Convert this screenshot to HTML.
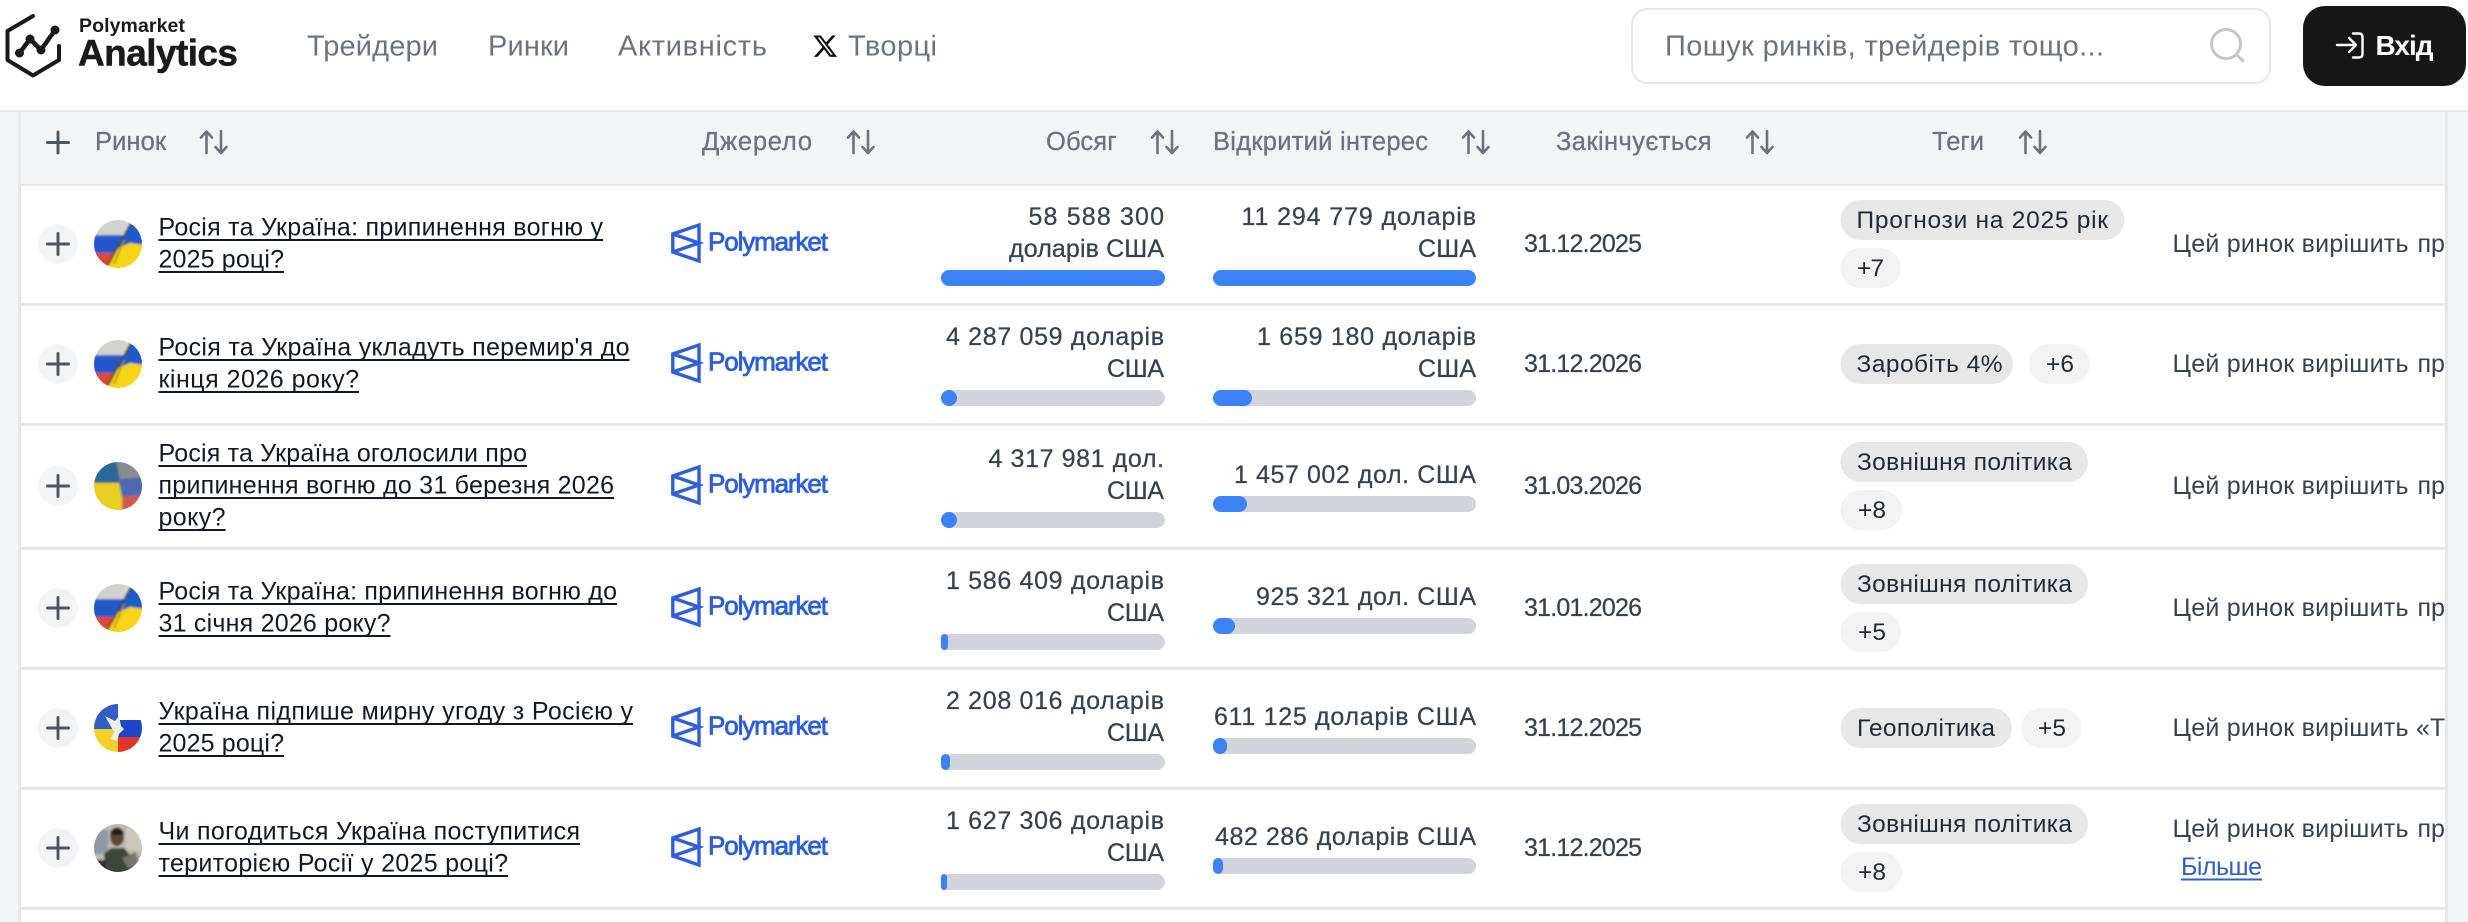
<!DOCTYPE html>
<html lang="uk"><head><meta charset="utf-8"><title>Polymarket Analytics</title>
<style>
html,body{margin:0;padding:0;background:#fff;width:2468px;height:922px;overflow:hidden}
svg{display:block}
text{font-family:"Liberation Sans","DejaVu Sans",sans-serif;white-space:pre}
.nav{font-size:29px;fill:#6b7280}
.th{font-size:25.5px;fill:#6b7280;stroke:#6b7280;stroke-width:.3px}
.t{font-size:25px;fill:#111827}
.u{fill:#111827}
.v{font-size:25px;fill:#374151;stroke:#374151;stroke-width:.25px}
.d{font-size:25px;fill:#374151}
.g{font-size:24.5px;fill:#1f2937}
.pm{font-size:26px;fill:#2d5fdc;stroke:#2d5fdc;stroke-width:.8px}
.sort{fill:none;stroke:#6b7280;stroke-width:2.6;stroke-linecap:round;stroke-linejoin:round}
.plus{stroke:#4b5563;stroke-width:2.900;stroke-linecap:round}
.logo{fill:none;stroke:#2d5fdc;stroke-width:3.4;stroke-linejoin:miter}
</style></head><body>
<svg xmlns="http://www.w3.org/2000/svg" width="2468" height="922" viewBox="0 0 2468 922">
<defs>
<clipPath id="cc"><circle cx="24" cy="24" r="24"/></clipPath>
<filter id="bl" x="-5%" y="-5%" width="110%" height="110%"><feGaussianBlur stdDeviation="1"/></filter>
<g id="flagA"><g clip-path="url(#cc)"><g filter="url(#bl)">
<rect x="-3" y="-3" width="54" height="54" fill="#d8d6d2"/><path d="M-3-3H34L24 15H-3z" fill="#d4d2cd"/>
<rect x="-3" y="15" width="54" height="18" fill="#2458cc"/><rect x="-3" y="33" width="54" height="18" fill="#dc4a38"/>
<path d="M37 2 51 8V51H12L22 30z" fill="#f7d415"/>
<path d="M37 2 51 8V25L36 23 22 29z" fill="#1f5cc8"/>
<path d="M37 3 14 45" stroke="#3f3e2c" stroke-width="1.800" fill="none"/>
<path d="M30 20 20 44" stroke="#a88e1c" stroke-width="1.500" fill="none"/>
</g></g></g>
<g id="flagB"><g clip-path="url(#cc)"><g filter="url(#bl)">
<rect x="-3" y="-3" width="54" height="54" fill="#e9cf22"/><rect x="-3" y="-3" width="29" height="24" fill="#2a6797"/>
<path d="M22-3H51V51H28L28 28z" fill="#8a8b92"/><path d="M24 17 51 15V33L28 35z" fill="#5069ae"/><path d="M28 35 51 33V51H28z" fill="#cf5a4c"/>
</g></g></g>
<g id="flagC"><g clip-path="url(#cc)">
<rect width="24" height="25" fill="#2f5fc4"/><rect y="25" width="24" height="23" fill="#f3cf2b"/>
<rect x="24" y="16" width="24" height="17" fill="#1d45c8"/><rect x="24" y="33" width="24" height="15" fill="#e0352b"/>
<rect x="24" width="24" height="16" fill="#fff"/>
<path d="M11 12 21 17 25 12 27 22 30 25 25 30 23 37 17 35 20 28z" fill="#eeeee6"/>
</g></g>
<g id="photo"><g clip-path="url(#cc)"><g filter="url(#bl)">
<rect x="-3" y="-3" width="54" height="54" fill="#bcb9b0"/><rect x="-3" y="6" width="17" height="24" fill="#8e99a8"/><rect x="32" y="4" width="19" height="22" fill="#cfc8ba"/>
<path d="M12 51 10 30 17 24H30L37 32 41 51z" fill="#3e453d"/>
<ellipse cx="23" cy="13" rx="7" ry="9" fill="#5e4536"/><path d="M16 8Q23-1 30 8L29 11H17z" fill="#221c17"/>
<path d="M28 34 42 28 46 42 34 44z" fill="#77746c"/><path d="M-3 36H12V51H-3z" fill="#332e2a"/>
</g></g></g>
<g id="pmlogo"><path class="logo" d="M28 1.500 1.800 10.500V28.500L28 37.500ZM1.800 10.500 28 19.500 1.800 28.500"/></g>
<g id="sort"><path class="sort" d="M6.500 23V1.500M1 7.500 6.500 1.500 12 7.500M21 1V23M15.500 17 21 23 26.500 17"/></g>
<g id="add"><circle cx="20" cy="20" r="20" fill="#f3f4f6"/><path class="plus" d="M9.500 20H30.500M20 9.500V30.500"/></g>
</defs>

<!-- page background -->
<rect x="0" y="110" width="2468" height="812" fill="#f3f4f6"/>
<rect x="18" y="112" width="2430" height="810" fill="#e5e7eb"/>
<rect x="0" y="110" width="2468" height="2" fill="#e5e7eb"/>
<rect x="21" y="112" width="2424" height="72" fill="#f3f4f6"/>
<rect x="21" y="186" width="2424" height="117" fill="#fff"/>
<rect x="21" y="306" width="2424" height="117" fill="#fff"/>
<rect x="21" y="426" width="2424" height="121" fill="#fff"/>
<rect x="21" y="550" width="2424" height="117" fill="#fff"/>
<rect x="21" y="670" width="2424" height="117" fill="#fff"/>
<rect x="21" y="790" width="2424" height="117" fill="#fff"/>
<rect x="21" y="910" width="2424" height="12" fill="#fff"/>

<!-- header -->
<g fill="none" stroke="#1a1a1a" stroke-width="4" stroke-linecap="round" stroke-linejoin="round">
<path d="M33 16 7.500 31V60L33 75.500 59 60V46"/>
<path d="M19.500 53 30 39 41 50 55 30" stroke-width="4.500"/></g>
<g fill="#1a1a1a"><circle cx="19.500" cy="53" r="4.500"/><circle cx="30" cy="39" r="4.500"/><circle cx="41" cy="50" r="4.500"/><circle cx="55" cy="30" r="4.500"/></g>
<text x="79" y="32" font-size="19.500" font-weight="700" fill="#1a1a1a" textLength="106">Polymarket</text>
<text x="78" y="65.500" font-size="37" font-weight="700" fill="#1a1a1a" stroke="#1a1a1a" stroke-width=".5" textLength="160">Analytics</text>
<text class="nav" x="307" y="55.500" textLength="131">Трейдери</text>
<text class="nav" x="488" y="55.500" textLength="81">Ринки</text>
<text class="nav" x="618" y="55.500" textLength="149">Активність</text>
<path transform="translate(812 33) scale(1.1)" fill="#111" d="M18.244 2.250h3.308l-7.227 8.260 8.502 11.240H16.170l-5.214-6.817L4.990 21.750H1.680l7.730-8.835L1.254 2.250H8.080l4.713 6.231zm-1.161 17.520h1.833L7.084 4.126H5.117z"/>
<text class="nav" x="848" y="55.500" textLength="89">Творці</text>
<rect x="1632" y="9" width="638" height="74" rx="15" fill="#fff" stroke="#e5e7eb" stroke-width="2"/>
<text class="nav" x="1665" y="55.500" textLength="439">Пошук ринків, трейдерів тощо...</text>
<g fill="none" stroke="#c4c6ca" stroke-width="3" stroke-linecap="round"><circle cx="2226" cy="44" r="14.500"/><path d="M2236.500 54.500 2243 61"/></g>
<rect x="2303" y="6" width="163" height="80" rx="22" fill="#171717"/>
<path d="M2337 45H2356M2349 38l7 7-7 7M2353 33.500h6q3.500 0 3.500 3.500v17q0 3.500-3.500 3.500h-6" fill="none" stroke="#fff" stroke-width="2.400" stroke-linecap="round" stroke-linejoin="round"/>
<text x="2375.500" y="55" font-size="28" font-weight="700" fill="#fff" textLength="58">Вхід</text>

<!-- table head -->
<path class="plus" d="M47.500 142.500H68.500M58 132V153"/>
<text class="th" x="95" y="150" textLength="71">Ринок</text><use href="#sort" x="200" y="130"/>
<text class="th" x="702" y="150" textLength="110">Джерело</text><use href="#sort" x="847" y="130"/>
<text class="th" x="1046" y="150" textLength="70.500">Обсяг</text><use href="#sort" x="1151" y="130"/>
<text class="th" x="1213" y="150" textLength="215">Відкритий інтерес</text><use href="#sort" x="1462" y="130"/>
<text class="th" x="1556" y="150" textLength="155.500">Закінчується</text><use href="#sort" x="1746" y="130"/>
<text class="th" x="1932" y="150" textLength="52">Теги</text><use href="#sort" x="2019" y="130"/>

<!-- row 1 -->
<use href="#add" x="38" y="224"/><use href="#flagA" x="94" y="220"/>
<text class="t" x="158.500" y="235.500" textLength="444.500">Росія та Україна: припинення вогню у</text><rect class="u" x="158.500" y="239" width="444.500" height="2"/>
<text class="t" x="158.500" y="267.500" textLength="125.500">2025 році?</text><rect class="u" x="158.500" y="271" width="125.500" height="2"/>
<use href="#pmlogo" x="671" y="223.500"/><text class="pm" x="708" y="250.500" textLength="120">Polymarket</text>
<text class="v" x="1028.500" y="225" textLength="135.500">58 588 300</text>
<text class="v" x="1009" y="257" textLength="155">доларів США</text>
<rect x="941" y="270" width="224" height="16" rx="8" fill="#3b82f6"/>
<text class="v" x="1241.500" y="225" textLength="234.500">11 294 779 доларів</text>
<text class="v" x="1418" y="257" textLength="58">США</text>
<rect x="1213" y="270" width="263" height="16" rx="8" fill="#3b82f6"/>
<text class="v" x="1524" y="252" textLength="118">31.12.2025</text>
<rect x="1840.500" y="200" width="284" height="40" rx="20" fill="#e7e7e7"/><text class="g" x="1856.500" y="228" textLength="251.500">Прогнози на 2025 рік</text>
<rect x="1840.500" y="248" width="60.500" height="40" rx="20" fill="#f3f3f3"/><text class="g" x="1857" y="276" textLength="27">+7</text>

<!-- row 2 -->
<use href="#add" x="38" y="344"/><use href="#flagA" x="94" y="340"/>
<text class="t" x="158.500" y="355.500" textLength="471">Росія та Україна укладуть перемир'я до</text><rect class="u" x="158.500" y="359" width="471" height="2"/>
<text class="t" x="158.500" y="387.500" textLength="200.500">кінця 2026 року?</text><rect class="u" x="158.500" y="391" width="200.500" height="2"/>
<use href="#pmlogo" x="671" y="343.500"/><text class="pm" x="708" y="370.500" textLength="120">Polymarket</text>
<text class="v" x="946" y="345" textLength="218">4 287 059 доларів</text>
<text class="v" x="1107" y="377" textLength="57">США</text>
<rect x="941" y="390" width="224" height="16" rx="8" fill="#d1d5db"/><rect x="941" y="390" width="16" height="16" rx="8" fill="#3b82f6"/>
<text class="v" x="1257" y="345" textLength="219">1 659 180 доларів</text>
<text class="v" x="1418" y="377" textLength="58">США</text>
<rect x="1213" y="390" width="263" height="16" rx="8" fill="#d1d5db"/><rect x="1213" y="390" width="39" height="16" rx="8" fill="#3b82f6"/>
<text class="v" x="1524" y="372" textLength="118">31.12.2026</text>
<rect x="1840.500" y="344" width="172.500" height="40" rx="20" fill="#e7e7e7"/><text class="g" x="1856.500" y="372" textLength="146">Заробіть 4%</text>
<rect x="2029" y="344" width="61" height="40" rx="20" fill="#f3f3f3"/><text class="g" x="2046" y="372" textLength="28">+6</text>

<!-- row 3 -->
<use href="#add" x="38" y="466"/><use href="#flagB" x="94" y="462"/>
<text class="t" x="158.500" y="461.500" textLength="368.500">Росія та Україна оголосили про</text><rect class="u" x="158.500" y="465" width="368.500" height="2"/>
<text class="t" x="158.500" y="493.500" textLength="455.500">припинення вогню до 31 березня 2026</text><rect class="u" x="158.500" y="497" width="455.500" height="2"/>
<text class="t" x="158.500" y="525.500" textLength="67">року?</text><rect class="u" x="158.500" y="529" width="67" height="2"/>
<use href="#pmlogo" x="671" y="465.500"/><text class="pm" x="708" y="492.500" textLength="120">Polymarket</text>
<text class="v" x="988.500" y="467" textLength="175.500">4 317 981 дол.</text>
<text class="v" x="1107" y="499" textLength="57">США</text>
<rect x="941" y="512" width="224" height="16" rx="8" fill="#d1d5db"/><rect x="941" y="512" width="16" height="16" rx="8" fill="#3b82f6"/>
<text class="v" x="1234" y="483" textLength="242">1 457 002 дол. США</text>
<rect x="1213" y="496" width="263" height="16" rx="8" fill="#d1d5db"/><rect x="1213" y="496" width="34" height="16" rx="8" fill="#3b82f6"/>
<text class="v" x="1524" y="494" textLength="118">31.03.2026</text>
<rect x="1840.500" y="442" width="247.500" height="40" rx="20" fill="#e7e7e7"/><text class="g" x="1857" y="470" textLength="215">Зовнішня політика</text>
<rect x="1840.500" y="490" width="61.500" height="40" rx="20" fill="#f3f3f3"/><text class="g" x="1858" y="518" textLength="28">+8</text>

<!-- row 4 -->
<use href="#add" x="38" y="588"/><use href="#flagA" x="94" y="584"/>
<text class="t" x="158.500" y="599.500" textLength="458.500">Росія та Україна: припинення вогню до</text><rect class="u" x="158.500" y="603" width="458.500" height="2"/>
<text class="t" x="158.500" y="631.500" textLength="232">31 січня 2026 року?</text><rect class="u" x="158.500" y="635" width="232" height="2"/>
<use href="#pmlogo" x="671" y="587.500"/><text class="pm" x="708" y="614.500" textLength="120">Polymarket</text>
<text class="v" x="946" y="589" textLength="218">1 586 409 доларів</text>
<text class="v" x="1107" y="621" textLength="57">США</text>
<rect x="941" y="634" width="224" height="16" rx="8" fill="#d1d5db"/><rect x="941" y="634" width="7" height="16" rx="3.500" fill="#3b82f6"/>
<text class="v" x="1256" y="605" textLength="220">925 321 дол. США</text>
<rect x="1213" y="618" width="263" height="16" rx="8" fill="#d1d5db"/><rect x="1213" y="618" width="22" height="16" rx="8" fill="#3b82f6"/>
<text class="v" x="1524" y="616" textLength="118">31.01.2026</text>
<rect x="1840.500" y="564" width="247.500" height="40" rx="20" fill="#e7e7e7"/><text class="g" x="1857" y="592" textLength="215">Зовнішня політика</text>
<rect x="1840.500" y="612" width="60.500" height="40" rx="20" fill="#f3f3f3"/><text class="g" x="1858" y="640" textLength="28">+5</text>

<!-- row 5 -->
<use href="#add" x="38" y="708"/><use href="#flagC" x="94" y="704"/>
<text class="t" x="158.500" y="719.500" textLength="474.500">Україна підпише мирну угоду з Росією у</text><rect class="u" x="158.500" y="723" width="474.500" height="2"/>
<text class="t" x="158.500" y="751.500" textLength="125.500">2025 році?</text><rect class="u" x="158.500" y="755" width="125.500" height="2"/>
<use href="#pmlogo" x="671" y="707.500"/><text class="pm" x="708" y="734.500" textLength="120">Polymarket</text>
<text class="v" x="946" y="709" textLength="218">2 208 016 доларів</text>
<text class="v" x="1107" y="741" textLength="57">США</text>
<rect x="941" y="754" width="224" height="16" rx="8" fill="#d1d5db"/><rect x="941" y="754" width="9" height="16" rx="4.500" fill="#3b82f6"/>
<text class="v" x="1214" y="725" textLength="262">611 125 доларів США</text>
<rect x="1213" y="738" width="263" height="16" rx="8" fill="#d1d5db"/><rect x="1213" y="738" width="14" height="16" rx="7" fill="#3b82f6"/>
<text class="v" x="1524" y="736" textLength="118">31.12.2025</text>
<rect x="1840.500" y="708" width="171.500" height="40" rx="20" fill="#e7e7e7"/><text class="g" x="1857" y="736" textLength="138">Геополітика</text>
<rect x="2021" y="708" width="60.500" height="40" rx="20" fill="#f3f3f3"/><text class="g" x="2038" y="736" textLength="28">+5</text>

<!-- row 6 -->
<use href="#add" x="38" y="828"/><use href="#photo" x="94" y="824"/>
<text class="t" x="158.500" y="839.500" textLength="421.500">Чи погодиться Україна поступитися</text><rect class="u" x="158.500" y="843" width="421.500" height="2"/>
<text class="t" x="158.500" y="871.500" textLength="349.500">територією Росії у 2025 році?</text><rect class="u" x="158.500" y="875" width="349.500" height="2"/>
<use href="#pmlogo" x="671" y="827.500"/><text class="pm" x="708" y="854.500" textLength="120">Polymarket</text>
<text class="v" x="946" y="829" textLength="218">1 627 306 доларів</text>
<text class="v" x="1107" y="861" textLength="57">США</text>
<rect x="941" y="874" width="224" height="16" rx="8" fill="#d1d5db"/><rect x="941" y="874" width="6" height="16" rx="3" fill="#3b82f6"/>
<text class="v" x="1215" y="845" textLength="261">482 286 доларів США</text>
<rect x="1213" y="858" width="263" height="16" rx="8" fill="#d1d5db"/><rect x="1213" y="858" width="10" height="16" rx="5" fill="#3b82f6"/>
<text class="v" x="1524" y="856" textLength="118">31.12.2025</text>
<rect x="1840.500" y="804" width="247.500" height="40" rx="20" fill="#e7e7e7"/><text class="g" x="1857" y="832" textLength="215">Зовнішня політика</text>
<rect x="1840.500" y="852" width="61.500" height="40" rx="20" fill="#f3f3f3"/><text class="g" x="1858" y="880" textLength="28">+8</text>

<!-- descriptions (clipped at table edge) -->
<clipPath id="dc"><rect x="2160" y="186" width="285" height="730"/></clipPath>
<g clip-path="url(#dc)">
<text class="d" x="2172.500" y="252" textLength="236">Цей ринок вирішить</text><text class="d" x="2417.500" y="252">про</text>
<text class="d" x="2172.500" y="372" textLength="236">Цей ринок вирішить</text><text class="d" x="2417.500" y="372">про</text>
<text class="d" x="2172.500" y="494" textLength="236">Цей ринок вирішить</text><text class="d" x="2417.500" y="494">про</text>
<text class="d" x="2172.500" y="616" textLength="236">Цей ринок вирішить</text><text class="d" x="2417.500" y="616">про</text>
<text class="d" x="2172.500" y="736" textLength="236">Цей ринок вирішить</text><text class="d" x="2416" y="736">«Так</text>
<text class="d" x="2172.500" y="837" textLength="236">Цей ринок вирішить</text><text class="d" x="2417.500" y="837">про</text>
</g>
<text x="2181" y="875" font-size="25" fill="#2f5fc4" textLength="81">Більше</text><rect x="2181" y="878.500" width="81" height="2" fill="#2f5fc4"/>
</svg>
</body></html>
